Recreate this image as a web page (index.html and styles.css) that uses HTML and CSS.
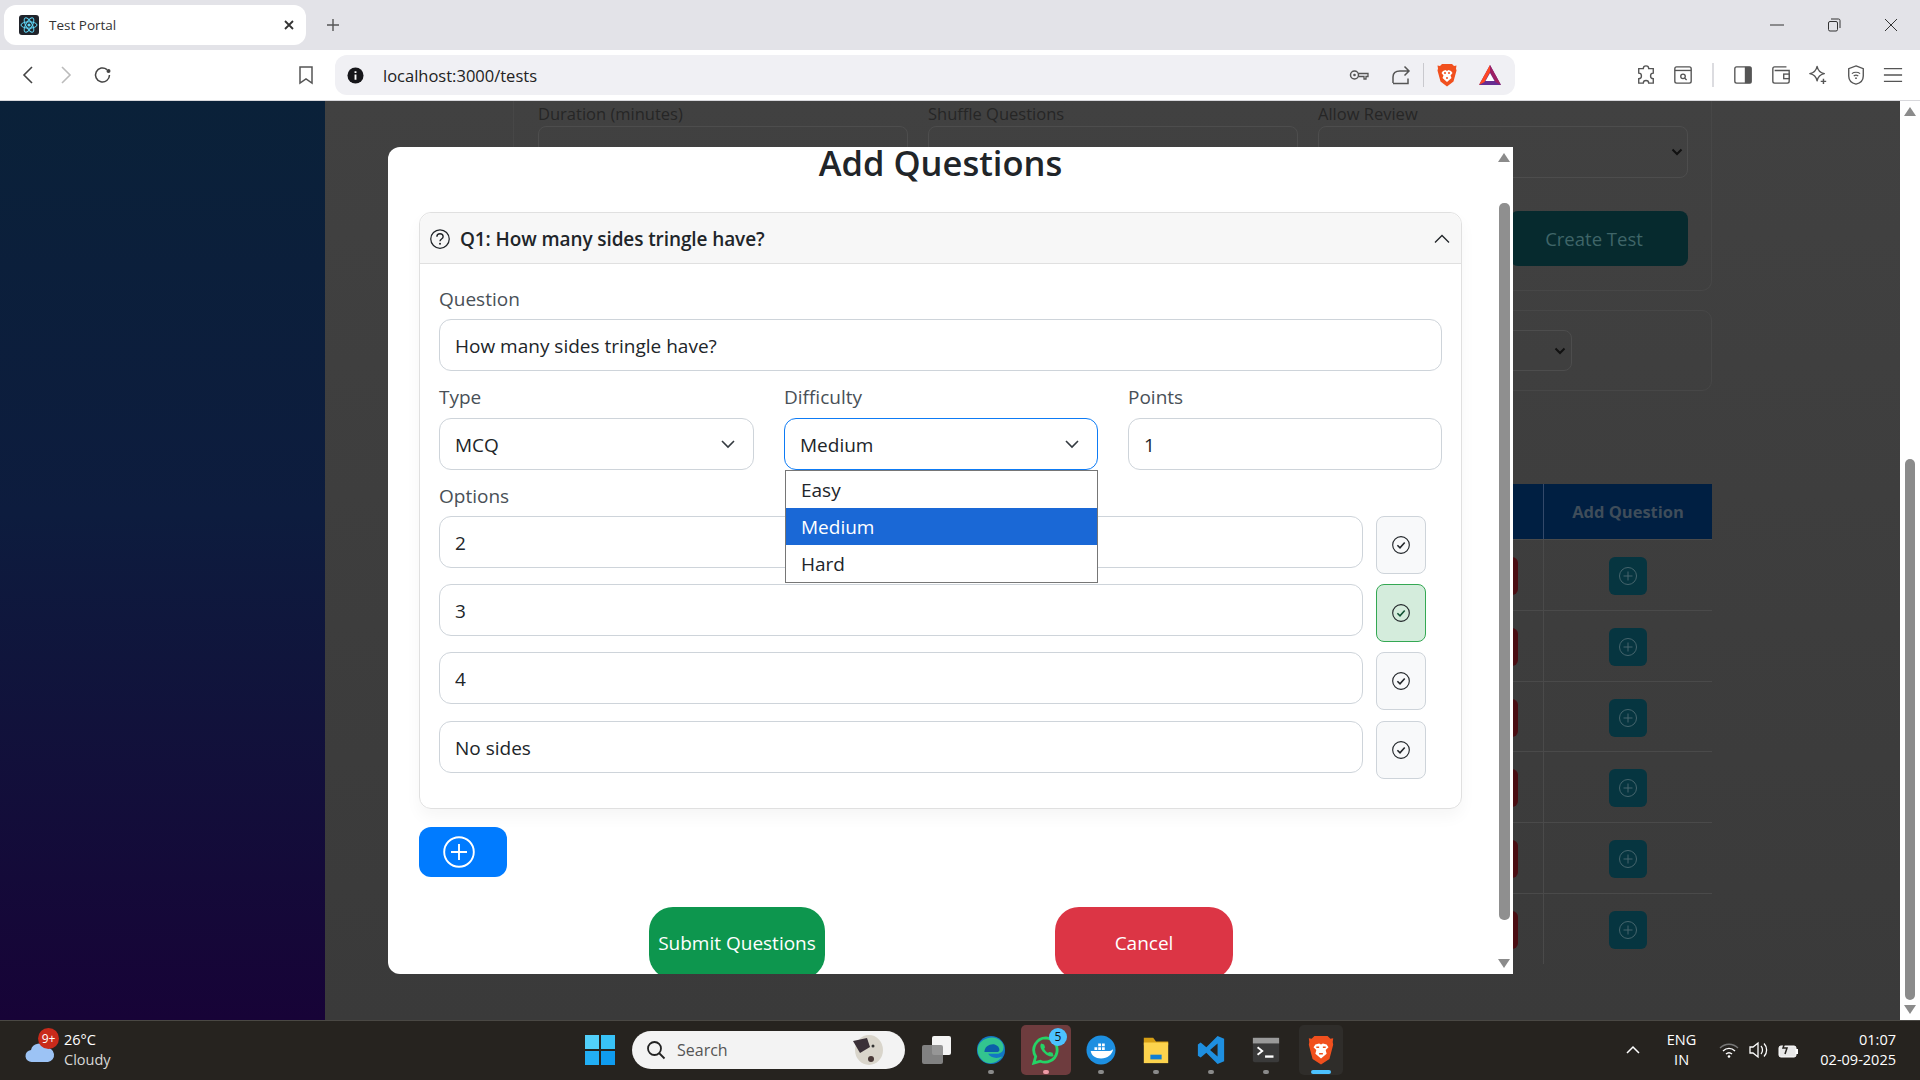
FILE: index.html
```html
<!DOCTYPE html>
<html lang="en">

<head>
    <meta charset="utf-8">
    <title>Test Portal</title>
    <link rel="stylesheet" href="styles.css">
</head>

<body>
    <!-- browser tab strip -->
    <div class="tabstrip">
        <div class="tab">
            <svg class="favicon" viewBox="0 0 20 20"><rect width="20" height="20" rx="3" fill="#20232a"/><g fill="none" stroke="#61dafb" stroke-width="1"><ellipse cx="10" cy="10" rx="8" ry="3.2"/><ellipse cx="10" cy="10" rx="8" ry="3.2" transform="rotate(60 10 10)"/><ellipse cx="10" cy="10" rx="8" ry="3.2" transform="rotate(120 10 10)"/></g><circle cx="10" cy="10" r="1.6" fill="#61dafb"/></svg>
            <span class="tab-title">Test Portal</span>
            <svg class="tab-close" viewBox="0 0 12 12"><path d="M2 2l8 8M10 2l-8 8" stroke="#333" stroke-width="1.8" fill="none"/></svg>
        </div>
        <svg class="new-tab" viewBox="0 0 16 16"><path d="M8 2v12M2 8h12" stroke="#555" stroke-width="1.4"/></svg>
        <div class="win-controls">
            <svg viewBox="0 0 14 14"><path d="M0 7h14" stroke="#333" stroke-width="1"/></svg>
            <svg viewBox="0 0 14 14"><rect x="1.5" y="3.5" width="9" height="9.5" rx="1.5" fill="none" stroke="#333"/><path d="M4 1h7.5a1.5 1.5 0 0 1 1.500 1.500V10" fill="none" stroke="#333"/></svg>
            <svg viewBox="0 0 14 14"><path d="M1 1l12 12M13 1L1 13" stroke="#333" stroke-width="1"/></svg>
        </div>
    </div>

    <!-- browser toolbar -->
    <div class="toolbar">
        <svg class="tool tool-back" viewBox="0 0 20 20"><path d="M13 2L5 10l8 8" fill="none" stroke="#444" stroke-width="1.6"/></svg>
        <svg class="tool tool-fwd" viewBox="0 0 20 20"><path d="M7 2l8 8-8 8" fill="none" stroke="#bbb" stroke-width="1.6"/></svg>
        <svg class="tool tool-reload" viewBox="0 0 20 20"><path d="M16.500 10a7 7 0 1 1-2.500-5.400" fill="none" stroke="#444" stroke-width="1.500"/><circle cx="15.500" cy="6" r="2" fill="#444"/></svg>
        <svg class="tool tool-mark" viewBox="0 0 20 20"><path d="M4 2h12v16l-6-4-6 4z" fill="none" stroke="#555" stroke-width="1.500"/></svg>
        <div class="urlbar">
            <svg class="url-info" viewBox="0 0 18 18"><circle cx="9" cy="9" r="8.500" fill="#16161a"/><path d="M9 4.500v1.800M9 8v5.500" stroke="#fff" stroke-width="2"/></svg>
            <span class="url-text">localhost:3000/tests</span>
            <svg class="url-key" viewBox="0 0 20 14"><circle cx="5.500" cy="7" r="4" fill="none" stroke="#555" stroke-width="1.500"/><circle cx="5.500" cy="7" r="1.300" fill="#555"/><path d="M9.500 5.500H19v3h-2V11h-2V8.500H9.500" fill="none" stroke="#555" stroke-width="1.300"/></svg>
            <svg class="url-share" viewBox="0 0 20 20"><path d="M2 18V12c0-4 3-6 7-6h9M13.500 1.500L18 6l-4.500 4.500M2 18.500h15v-5" fill="none" stroke="#555" stroke-width="1.500"/></svg>
            <span class="url-sep"></span>
            <svg class="url-brave" viewBox="0 0 20 24"><path d="M5 1h10l2 2 2.500-.5-.5 3 .5 2-3 11-6.500 5-6.500-5-3-11 .5-2-.5-3L3 3z" fill="#f1501e"/><path d="M6 8l2.500-1 1.500 1 1.500-1L14 8l1.500 2-2 2.500 1 2.500L10 19l-4.500-4 1-2.500-2-2.500z" fill="#fff"/><path d="M7 10h2M11 10h2M9 15h2" stroke="#f1501e" stroke-width="1.400"/></svg>
            <svg class="url-bat" viewBox="0 0 24 22"><path d="M12 1l11 20H1z" fill="#662d91"/><path d="M12 1l11 20-5.500-3L12 8z" fill="#9e1f63"/><path d="M12 1L1 21l5.500-3L12 8z" fill="#ff4724"/><path d="M12 9l4.500 8h-9z" fill="#fff"/></svg>
        </div>
        <svg class="tool tool-ext" viewBox="0 0 22 22"><path d="M8 4a3 3 0 0 1 6 0h5v5a3 3 0 0 0 0 6v5h-5a3 3 0 0 0-6 0H3v-5a3 3 0 0 0 0-6V4z" fill="none" stroke="#555" stroke-width="1.500"/></svg>
        <svg class="tool tool-find" viewBox="0 0 22 22"><rect x="2" y="2" width="18" height="18" rx="2" fill="none" stroke="#555" stroke-width="1.500"/><path d="M2 6h18" stroke="#555" stroke-width="1.500"/><circle cx="11" cy="12.500" r="2.500" fill="none" stroke="#555" stroke-width="1.500"/><path d="M13 14.500l2 2" stroke="#555" stroke-width="1.500"/></svg>
        <span class="tool-sep"></span>
        <svg class="tool tool-side" viewBox="0 0 22 22"><rect x="2" y="2" width="18" height="18" rx="2" fill="none" stroke="#555" stroke-width="1.500"/><rect x="13" y="2" width="7" height="18" fill="#555"/></svg>
        <svg class="tool tool-wallet" viewBox="0 0 22 22"><path d="M17 2H4a2 2 0 0 0-2 2v14a2 2 0 0 0 2 2h14a2 2 0 0 0 2-2V6H4" fill="none" stroke="#555" stroke-width="1.500"/><rect x="14" y="10" width="6" height="5" fill="#fff" stroke="#555" stroke-width="1.500"/></svg>
        <svg class="tool tool-leo" viewBox="0 0 22 22"><path d="M10 1.500c1 5 3 7 8 8-5 1-7 3-8 8-1-5-3-7-8-8 5-1 7-3 8-8z" fill="none" stroke="#555" stroke-width="1.500" stroke-linejoin="round"/><path d="M17 15v6M14 18h6" stroke="#555" stroke-width="1.600"/></svg>
        <svg class="tool tool-vpn" viewBox="0 0 22 22"><path d="M11 1l8 3v8c0 5-4 8-8 9-4-1-8-4-8-9V4z" fill="none" stroke="#555" stroke-width="1.500"/><path d="M6.500 9.500c2.500-2 6.500-2 9 0M8.500 12c1.500-1 3.500-1 5 0" fill="none" stroke="#555" stroke-width="1.300"/><circle cx="11" cy="14.500" r="1" fill="#555"/></svg>
        <svg class="tool tool-menu" viewBox="0 0 22 22"><path d="M1 4h20M1 11h20M1 18h20" stroke="#555" stroke-width="1.500"/></svg>
    </div>

    <div class="viewport">
        <div class="sidebar"></div>

        <!-- page behind the modal, already dimmed -->
        <main class="main">
            <section class="bg-card bg-card-form">
                <div class="bg-form">
                    <div class="bg-field"><span>Duration (minutes)</span><div class="bg-input"></div></div>
                    <div class="bg-field"><span>Shuffle Questions</span><div class="bg-input"></div></div>
                    <div class="bg-field"><span>Allow Review</span>
                        <div class="bg-input"><svg class="bg-chev" viewBox="0 0 12 8"><path d="M1.500 1.500L6 6l4.500-4.500" fill="none" stroke="#111" stroke-width="2"/></svg></div>
                    </div>
                </div>
                <div class="bg-actions"><div class="bg-create">Create Test</div></div>
            </section>
            <section class="bg-card bg-card-filter">
                <div class="bg-select"><svg class="bg-chev" viewBox="0 0 12 8"><path d="M1.500 1.500L6 6l4.500-4.500" fill="none" stroke="#111" stroke-width="2"/></svg></div>
            </section>
            <section class="bg-table">
                <div class="bg-head"><div class="bg-head-cell">Add Question</div></div>
                <div class="bg-row"><div class="bg-cell-a"><span class="bg-del"></span></div><div class="bg-cell-b"><span class="bg-add"><svg viewBox="0 0 20 20"><circle cx="10" cy="10" r="8.500" fill="none" stroke="#46656d"/><path d="M10 5.500v9M5.500 10h9" stroke="#46656d"/></svg></span></div></div>
                <div class="bg-row"><div class="bg-cell-a"><span class="bg-del"></span></div><div class="bg-cell-b"><span class="bg-add"><svg viewBox="0 0 20 20"><circle cx="10" cy="10" r="8.500" fill="none" stroke="#46656d"/><path d="M10 5.500v9M5.500 10h9" stroke="#46656d"/></svg></span></div></div>
                <div class="bg-row"><div class="bg-cell-a"><span class="bg-del"></span></div><div class="bg-cell-b"><span class="bg-add"><svg viewBox="0 0 20 20"><circle cx="10" cy="10" r="8.500" fill="none" stroke="#46656d"/><path d="M10 5.500v9M5.500 10h9" stroke="#46656d"/></svg></span></div></div>
                <div class="bg-row"><div class="bg-cell-a"><span class="bg-del"></span></div><div class="bg-cell-b"><span class="bg-add"><svg viewBox="0 0 20 20"><circle cx="10" cy="10" r="8.500" fill="none" stroke="#46656d"/><path d="M10 5.500v9M5.500 10h9" stroke="#46656d"/></svg></span></div></div>
                <div class="bg-row"><div class="bg-cell-a"><span class="bg-del"></span></div><div class="bg-cell-b"><span class="bg-add"><svg viewBox="0 0 20 20"><circle cx="10" cy="10" r="8.500" fill="none" stroke="#46656d"/><path d="M10 5.500v9M5.500 10h9" stroke="#46656d"/></svg></span></div></div>
                <div class="bg-row"><div class="bg-cell-a"><span class="bg-del"></span></div><div class="bg-cell-b"><span class="bg-add"><svg viewBox="0 0 20 20"><circle cx="10" cy="10" r="8.500" fill="none" stroke="#46656d"/><path d="M10 5.500v9M5.500 10h9" stroke="#46656d"/></svg></span></div></div>
            </section>
        </main>

        <div class="page-scroll">
            <span class="arrow-up"></span>
            <span class="page-thumb"></span>
            <span class="arrow-down"></span>
        </div>

        <!-- modal -->
        <div class="modal">
            <div class="modal-body">
                <h2 class="modal-title">Add Questions</h2>

                <div class="q-card">
                    <div class="q-header">
                        <svg class="q-icon" viewBox="0 0 16 16"><circle cx="8" cy="8" r="7.400" fill="none" stroke="#212529" stroke-width="1"/><path d="M5.500 6.200c0-3.200 5-3.200 5 0 0 1.800-2.500 1.800-2.500 3.600" fill="none" stroke="#212529" stroke-width="1.100"/><circle cx="8" cy="11.800" r=".8" fill="#212529"/></svg>
                        <span class="q-title">Q1: How many sides tringle have?</span>
                        <svg class="q-chev" viewBox="0 0 16 10"><path d="M1 8.500l7-7 7 7" fill="none" stroke="#212529" stroke-width="1.300"/></svg>
                    </div>
                    <div class="q-body">
                        <label class="f-label">Question</label>
                        <input class="f-input" type="text" value="How many sides tringle have?">

                        <div class="f-row">
                            <div class="f-col">
                                <label class="f-label">Type</label>
                                <div class="f-select"><span>MCQ</span><svg class="sel-chev" viewBox="0 0 16 10"><path d="M2 2l6 6 6-6" fill="none" stroke="#343a40" stroke-width="1.600"/></svg></div>
                            </div>
                            <div class="f-col f-col-dd">
                                <label class="f-label">Difficulty</label>
                                <div class="f-select f-select-open"><span>Medium</span><svg class="sel-chev" viewBox="0 0 16 10"><path d="M2 2l6 6 6-6" fill="none" stroke="#343a40" stroke-width="1.600"/></svg></div>
                                <ul class="dropdown">
                                    <li>Easy</li>
                                    <li class="dd-active">Medium</li>
                                    <li>Hard</li>
                                </ul>
                            </div>
                            <div class="f-col">
                                <label class="f-label">Points</label>
                                <input class="f-input" type="text" value="1">
                            </div>
                        </div>

                        <label class="f-label f-label-options">Options</label>
                        <div class="opt-list">
                            <div class="opt-row">
                                <input class="f-input" type="text" value="2">
                                <button class="opt-btn"><svg viewBox="0 0 16 16"><circle cx="8" cy="8" r="7.400" fill="none" stroke="#212529"/><path d="M4.800 8.200l2.300 2.300 4.200-4.700" fill="none" stroke="#212529" stroke-width="1.400"/></svg></button>
                            </div>
                            <div class="opt-row">
                                <input class="f-input" type="text" value="3">
                                <button class="opt-btn opt-btn-on"><svg viewBox="0 0 16 16"><circle cx="8" cy="8" r="7.400" fill="none" stroke="#212529"/><path d="M4.800 8.200l2.300 2.300 4.200-4.700" fill="none" stroke="#0f5132" stroke-width="1.400"/></svg></button>
                            </div>
                            <div class="opt-row">
                                <input class="f-input" type="text" value="4">
                                <button class="opt-btn"><svg viewBox="0 0 16 16"><circle cx="8" cy="8" r="7.400" fill="none" stroke="#212529"/><path d="M4.800 8.200l2.300 2.300 4.200-4.700" fill="none" stroke="#212529" stroke-width="1.400"/></svg></button>
                            </div>
                            <div class="opt-row">
                                <input class="f-input" type="text" value="No sides">
                                <button class="opt-btn"><svg viewBox="0 0 16 16"><circle cx="8" cy="8" r="7.400" fill="none" stroke="#212529"/><path d="M4.800 8.200l2.300 2.300 4.200-4.700" fill="none" stroke="#212529" stroke-width="1.400"/></svg></button>
                            </div>
                        </div>
                    </div>
                </div>

                <button class="add-btn"><svg viewBox="0 0 32 32"><circle cx="16" cy="16" r="14.800" fill="none" stroke="#fff" stroke-width="1.900"/><path d="M16 8v16M8 16h16" stroke="#fff" stroke-width="1.900"/></svg></button>

                <div class="modal-footer">
                    <button class="foot-btn foot-submit">Submit Questions</button>
                    <button class="foot-btn foot-cancel">Cancel</button>
                </div>
            </div>
            <div class="modal-scroll">
                <span class="arrow-up"></span>
                <span class="modal-thumb"></span>
                <span class="arrow-down"></span>
            </div>
        </div>
    </div>

    <!-- windows taskbar -->
    <footer class="taskbar">
        <div class="weather">
            <svg class="weather-icon" viewBox="0 0 32 32"><path d="M8 26a6 6 0 0 1-1-12 8 8 0 0 1 15-2 7 7 0 0 1 2 14z" fill="#9cc3f5"/></svg>
            <span class="weather-badge">9+</span>
            <div class="weather-text"><span>26°C</span><span class="dim-text">Cloudy</span></div>
        </div>

        <svg class="win-logo" viewBox="0 0 30 30"><rect width="14" height="14" fill="#52d0fa"/><rect x="16" width="14" height="14" fill="#38c2f7"/><rect y="16" width="14" height="14" fill="#22aff5"/><rect x="16" y="16" width="14" height="14" fill="#0f9cf0"/></svg>

        <div class="search-pill">
            <svg class="search-icon" viewBox="0 0 20 20"><circle cx="8.500" cy="8.500" r="6.500" fill="none" stroke="#222" stroke-width="1.800"/><path d="M13 13l5.500 5.500" stroke="#222" stroke-width="1.800"/></svg>
            <span class="search-text">Search</span>
            <svg class="search-art" viewBox="0 0 36 32"><ellipse cx="20" cy="16" rx="14" ry="15" fill="#d9d5cb"/><path d="M4 7l14-3 3 9-10 6z" fill="#3a3038"/><circle cx="24" cy="12" r="1.500" fill="#333"/><circle cx="22" cy="25" r="3" fill="#4a3a38"/></svg>
        </div>

        <svg class="task-view" viewBox="0 0 32 30"><rect x="11" y="1" width="19" height="19" rx="2" fill="#f4f4f4"/><rect x="1" y="10" width="21" height="19" rx="2" fill="#8c8c8c" opacity=".9"/></svg>

        <div class="task-item">
            <svg viewBox="0 0 32 32"><circle cx="16" cy="16" r="15" fill="#1277c4"/><path d="M2 13C5 3 20-1 27 7c4 5 3 12-3 13H13c2 4 9 6 15 3-5 7-14 9-20 5C3 24 1 19 2 13z" fill="#33c48f"/><path d="M9 18c0-6 6-9 11-8 3 1 5 3 5 6 0 1-1 2-2 2z" fill="#0b5fa8"/></svg>
            <i class="task-dot"></i>
        </div>
        <div class="task-item task-item-wa">
            <svg viewBox="0 0 32 32"><path d="M16 3a13 13 0 0 0-11 20l-2 7 7-2A13 13 0 1 0 16 3z" fill="none" stroke="#25d366" stroke-width="3"/><path d="M11 9c-2 2-1 6 3 10s8 5 10 3l-1-3-3-1-2 1c-2-1-3-3-4-4l1-2-1-3z" fill="#25d366"/></svg>
            <span class="wa-badge">5</span>
            <i class="task-dot task-dot-pink"></i>
        </div>
        <div class="task-item">
            <svg viewBox="0 0 32 32"><circle cx="16" cy="16" r="15.500" fill="#1d8fe1"/><path d="M5 17h20c2 0 3-1 4-2-1 6-6 10-13 10-6 0-10-3-11-8z" fill="#fff"/><path d="M9 13h3v3H9zM13 13h3v3h-3zM17 13h3v3h-3zM13 9h3v3h-3zM17 9h3v3h-3z" fill="#fff"/></svg>
            <i class="task-dot"></i>
        </div>
        <div class="task-item">
            <svg viewBox="0 0 32 32"><path d="M3 3h10l3 4h13v4H3z" fill="#d69e14"/><rect x="3" y="8" width="26" height="22" fill="#fcd34d"/><rect x="10" y="21" width="12" height="5" fill="#0f7fd4"/></svg>
            <i class="task-dot"></i>
        </div>
        <div class="task-item">
            <svg viewBox="0 0 32 32"><path d="M23 1l7 3v24l-7 3-12-12-6 5-3-2V10l3-2 6 5z" fill="#1e8fe0"/><path d="M23 9l-8 7 8 7z" fill="#26231f"/></svg>
            <i class="task-dot"></i>
        </div>
        <div class="task-item">
            <svg viewBox="0 0 32 32"><rect x="2" y="3" width="28" height="26" rx="2" fill="#3a3a3a"/><rect x="2" y="3" width="28" height="6" fill="#9a9a9a"/><path d="M7 13l5 4-5 4" fill="none" stroke="#fff" stroke-width="2"/><path d="M15 23h9" stroke="#fff" stroke-width="2.500"/></svg>
            <i class="task-dot"></i>
        </div>
        <div class="task-item task-item-brave">
            <svg viewBox="0 0 28 32"><path d="M7 1h14l3 3 3-.5-.5 4 .5 3-4 15-9 6-9-6-4-15 .5-3-.5-4 3 .5z" fill="#f1501e"/><path d="M8 10l4-1 2 1 2-1 4 1 2 3-3 3 1 4-6 5-6-5 1-4-3-3z" fill="#fff"/><path d="M9 13h3M16 13h3M12 20h4" stroke="#f1501e" stroke-width="1.700"/></svg>
            <i class="task-bar"></i>
        </div>

        <div class="tray">
            <svg class="tray-chev" viewBox="0 0 14 9"><path d="M1 8l6-6 6 6" fill="none" stroke="#fff" stroke-width="1.500"/></svg>
            <div class="tray-lang"><span>ENG</span><span>IN</span></div>
            <svg class="tray-wifi" viewBox="0 0 20 16"><path d="M1 6c5-5 13-5 18 0" fill="none" stroke="#777" stroke-width="1.400"/><path d="M4 9c3.500-3.500 8.500-3.500 12 0M7 12c2-1.800 4-1.800 6 0" fill="none" stroke="#fff" stroke-width="1.400"/><circle cx="10" cy="14.500" r="1.300" fill="#fff"/></svg>
            <svg class="tray-vol" viewBox="0 0 20 18"><path d="M2 6h3l5-4v14l-5-4H2z" fill="none" stroke="#fff" stroke-width="1.300"/><path d="M13 5c2 2 2 6 0 8M16 2.500c3.500 3.500 3.500 9.500 0 13" fill="none" stroke="#fff" stroke-width="1.300"/></svg>
            <svg class="tray-bat" viewBox="0 0 22 18"><rect x="2" y="5" width="17" height="11" rx="2" fill="#e8e8e8" stroke="#fff"/><rect x="19" y="8" width="2" height="5" fill="#fff"/><path d="M8 1l-2 6h4l-2 6" fill="none" stroke="#26231f" stroke-width="1.500"/></svg>
            <div class="tray-clock"><span>01:07</span><span>02-09-2025</span></div>
        </div>
    </footer>
</body>

</html>
```

FILE: styles.css
```css
* {
    box-sizing: border-box;
}

html,
body {
    margin: 0;
    height: 1080px;
    overflow: hidden;
}

body {
    font-family: "Open Sans", "Noto Sans", sans-serif;
    color: #212529;
    background: #3f3f3f;
}

/* tab strip */
.tabstrip {
    height: 50px;
    background: #e3e3e8;
    display: flex;
    align-items: center;
    padding-left: 4px;
}

.tab {
    width: 302px;
    height: 40px;
    margin-top: -1px;
    background: #fff;
    border-radius: 12px;
    display: flex;
    align-items: center;
    padding: 0 11px 0 15px;
}

.favicon {
    width: 20px;
    height: 20px;
}

.tab-title {
    font-size: 13.500px;
    color: #333;
    margin-left: 10px;
    flex: 1;
}

.tab-close {
    width: 12px;
    height: 12px;
}

.new-tab {
    width: 16px;
    height: 16px;
    margin-left: 19px;
}

.win-controls {
    margin-left: auto;
    display: flex;
    align-items: center;
    gap: 43px;
    padding-right: 22px;
}

.win-controls svg {
    width: 14px;
    height: 14px;
}

/* toolbar */
.toolbar {
    height: 51px;
    background: #fff;
    border-bottom: 1px solid #d8d8dc;
    display: flex;
    align-items: center;
    padding-left: 19px;
}

.tool {
    width: 20px;
    height: 20px;
    flex: none;
}

.tool-fwd {
    margin-left: 16px;
}

.tool-reload {
    margin-left: 18px;
}

.tool-mark {
    margin-left: 183px;
}

.urlbar {
    width: 1180px;
    height: 40px;
    margin-left: 19px;
    border-radius: 12px;
    background: #f0f0f4;
    display: flex;
    align-items: center;
    padding-left: 12px;
}

.url-info {
    width: 17px;
    height: 17px;
}

.url-text {
    font-size: 16.500px;
    color: #222;
    margin-left: 19px;
}

.url-key {
    width: 20px;
    height: 14px;
    margin-left: auto;
}

.url-share {
    width: 20px;
    height: 20px;
    margin-left: 22px;
}

.url-sep {
    width: 1px;
    height: 24px;
    background: #c9c9ce;
    margin-left: 12px;
}

.url-brave {
    width: 20px;
    height: 24px;
    margin-left: 13px;
}

.url-bat {
    width: 24px;
    height: 22px;
    margin-left: 21px;
    margin-right: 13px;
}

.tool-ext {
    margin-left: 121px;
}

.tool-find {
    margin-left: 17px;
}

.tool-sep {
    width: 2px;
    height: 24px;
    background: #dcdce0;
    margin-left: 19px;
}

.tool-side {
    margin-left: 19px;
}

.tool-wallet {
    margin-left: 18px;
}

.tool-leo {
    margin-left: 17px;
}

.tool-vpn {
    margin-left: 18px;
}

.tool-menu {
    margin-left: 17px;
}

/* viewport */
.viewport {
    height: 919px;
    display: flex;
    position: relative;
    overflow: hidden;
}

.sidebar {
    width: 325px;
    flex: none;
    background: linear-gradient(180deg, #0a2139 0%, #0d1c3e 45%, #170337 100%);
}

.main {
    flex: 1;
    background: linear-gradient(180deg, #414141, #3a3a3a);
    padding-left: 188px;
    padding-right: 188px;
    overflow: hidden;
}

.page-scroll {
    width: 20px;
    flex: none;
    background: #fff;
    position: relative;
    display: flex;
    flex-direction: column;
    align-items: center;
    justify-content: space-between;
    padding: 6px 0;
}

.page-thumb {
    position: absolute;
    top: 358px;
    left: 5px;
    width: 10px;
    height: 541px;
    border-radius: 5px;
    background: #8b8b8b;
}

.arrow-up,
.arrow-down {
    width: 0;
    height: 0;
    border-left: 6px solid transparent;
    border-right: 6px solid transparent;
}

.arrow-up {
    border-bottom: 9px solid #8b8b8b;
}

.arrow-down {
    border-top: 9px solid #8b8b8b;
}

/* dimmed page */
.bg-card {
    border: 1px solid #474747;
    border-radius: 10px;
}

.bg-card-form {
    height: 190px;
    border-top: none;
    padding: 0 23px 0 24px;
    border-radius: 0 0 10px 10px;
}

.bg-form {
    display: grid;
    grid-template-columns: repeat(3, 370px);
    column-gap: 20px;
    margin-right: -20px;
}

.bg-field span {
    display: block;
    font-size: 16.500px;
    line-height: 24px;
    padding-top: 1px;
    height: 25px;
    color: #262626;
}

.bg-input {
    height: 52px;
    border: 1px solid #4d4d4d;
    border-radius: 8px;
    position: relative;
}

.bg-chev {
    position: absolute;
    right: 4px;
    top: 21px;
    width: 12px;
    height: 8px;
}

.bg-actions {
    display: flex;
    justify-content: flex-end;
    margin-top: 33px;
}

.bg-create {
    width: 178px;
    height: 55px;
    background: #062a2e;
    border-radius: 8px;
    color: #3f6568;
    font-size: 18.500px;
    padding-right: 10px;
    display: flex;
    align-items: center;
    justify-content: center;
}

.bg-card-filter {
    height: 81px;
    margin-top: 19px;
    padding-top: 19px;
    display: flex;
    justify-content: flex-start;
    padding-left: 900px;
}

.bg-select {
    width: 158px;
    height: 41px;
    border: 1px solid #4d4d4d;
    border-radius: 8px;
    position: relative;
}

.bg-select .bg-chev {
    top: 16px;
    right: 5px;
}

.bg-table {
    margin-top: 93px;
}

.bg-head {
    height: 55px;
    background: #001f42;
    display: flex;
    justify-content: flex-end;
}

.bg-head-cell {
    width: 169px;
    border-left: 1px solid #33496a;
    color: #3f4d5a;
    font-size: 16.500px;
    font-weight: 700;
    display: flex;
    align-items: center;
    justify-content: center;
}

.bg-row {
    height: 70.800px;
    border-top: 1px solid #4a4a4a;
    display: flex;
    justify-content: flex-end;
}

.bg-cell-a {
    flex: 1;
    display: flex;
    justify-content: flex-end;
    padding: 17px 25px 0 0;
}

.bg-del {
    width: 38px;
    height: 38px;
    background: #4a0d12;
    border-radius: 6px;
}

.bg-cell-b {
    width: 169px;
    border-left: 1px solid #4a4a4a;
    display: flex;
    justify-content: center;
    padding-top: 17px;
}

.bg-add {
    width: 38px;
    height: 38px;
    background: #063540;
    border-radius: 6px;
    display: flex;
    align-items: center;
    justify-content: center;
}

.bg-add svg {
    width: 20px;
    height: 20px;
}

/* modal sits over the page */
.modal {
    position: absolute;
    left: 388px;
    top: 46px;
    width: 1125px;
    height: 827px;
    background: #fff;
    border-radius: 12px 0 0 12px;
    display: flex;
    overflow: hidden;
}

.modal-body {
    flex: 1;
    padding: 0 35px 0 31px;
    overflow: hidden;
}

.modal-scroll {
    width: 16px;
    flex: none;
    display: flex;
    flex-direction: column;
    align-items: center;
    justify-content: space-between;
    padding: 6px 3px 6px 0;
    position: relative;
}

.modal-thumb {
    position: absolute;
    left: 2px;
    top: 56px;
    width: 11px;
    height: 717px;
    border-radius: 5px;
    background: #8f8f8f;
}

.modal-title {
    margin: 0;
    height: 65px;
    font-size: 34.500px;
    font-weight: 600;
    line-height: 31px;
    text-align: center;
    color: #212529;
}

.q-card {
    border: 1px solid #e0e0e0;
    border-radius: 12px;
    box-shadow: 0 8px 16px rgba(0, 0, 0, 0.04);
    height: 597px;
}

.q-header {
    height: 51px;
    background: #f7f7f7;
    border-bottom: 1px solid #e0e0e0;
    border-radius: 12px 12px 0 0;
    display: flex;
    align-items: center;
    padding: 2px 11px 0 10px;
}

.q-icon {
    width: 20px;
    height: 20px;
}

.q-title {
    margin-left: 10px;
    font-size: 19px;
    font-weight: 600;
    flex: 1;
    letter-spacing: -0.1px;
}

.q-chev {
    width: 16px;
    height: 10px;
}

.q-body {
    padding: 23px 19px 0;
}

.f-label {
    display: block;
    height: 24px;
    line-height: 24px;
    margin-bottom: 8px;
    font-size: 19px;
    font-weight: 500;
    color: #495057;
}

.f-input,
.f-select {
    display: flex;
    align-items: center;
    width: 100%;
    height: 52px;
    border: 1px solid #ced4da;
    border-radius: 12px;
    background: #fff;
    padding: 2px 15px 0;
    font-family: inherit;
    font-size: 19px;
    color: #212529;
    outline: none;
}

.f-select {
    justify-content: space-between;
    padding-right: 17px;
}

.f-select-open {
    border-color: #0d7bf5;
}

.sel-chev {
    width: 16px;
    height: 10px;
    margin-top: -3px;
}

.f-row {
    display: grid;
    grid-template-columns: 315px 314px 1fr;
    column-gap: 30px;
    margin-top: 14px;
}

.f-row .f-label {
    margin-bottom: 9px;
}

.f-col-dd {
    position: relative;
}

.dropdown {
    position: absolute;
    left: 1px;
    right: 0;
    top: 85px;
    margin: 0;
    padding: 0;
    list-style: none;
    background: #fff;
    border: 1px solid #767676;
    font-size: 19px;
    z-index: 5;
}

.dropdown li {
    height: 37px;
    line-height: 39px;
    padding-left: 15px;
}

.dd-active {
    background: #1a68d6;
    color: #fff;
}

.f-label-options {
    margin-top: 14px;
    margin-bottom: 8px;
}

.opt-list {
    display: flex;
    flex-direction: column;
    gap: 10.200px;
}

.opt-row {
    display: flex;
    align-items: flex-start;
    height: 58px;
}

.opt-row .f-input {
    width: 924px;
}

.opt-btn {
    width: 50px;
    height: 58px;
    margin-left: 13px;
    border: 1px solid #ced4da;
    border-radius: 8px;
    background: #f8f9fa;
    display: flex;
    align-items: center;
    justify-content: center;
    padding: 0;
}

.opt-btn svg {
    width: 18px;
    height: 18px;
}

.opt-btn-on {
    background: #d4ecdc;
    border-color: #34a853;
}

.add-btn {
    display: flex;
    align-items: center;
    justify-content: center;
    width: 88px;
    height: 50px;
    margin-top: 18px;
    border: none;
    border-radius: 12px;
    background: #007bff;
    padding: 0 9px 0 0;
}

.add-btn svg {
    width: 32px;
    height: 32px;
}

.modal-footer {
    display: flex;
    margin-top: 30px;
    padding-left: 230px;
}

.foot-btn {
    height: 72px;
    border: none;
    border-radius: 24px;
    color: #fff;
    font-family: inherit;
    font-size: 19px;
    padding: 0;
    flex: none;
}

.foot-submit {
    width: 176px;
    background: #0d964e;
}

.foot-cancel {
    width: 178px;
    margin-left: 230px;
    background: #dc3545;
}

/* taskbar */
.taskbar {
    height: 60px;
    border-top: 1px solid #4a4844;
    background: #26231f;
    display: flex;
    align-items: center;
    color: #fff;
    font-size: 14.500px;
    padding-bottom: 2px;
    position: relative;
}

.weather {
    width: 585px;
    display: flex;
    align-items: center;
    position: relative;
    padding-left: 24px;
    height: 100%;
}

.weather-icon {
    width: 32px;
    height: 32px;
    margin-top: 4px;
}

.weather-badge {
    position: absolute;
    left: 38px;
    top: 7px;
    width: 21px;
    height: 21px;
    border-radius: 50%;
    background: #c92a1b;
    font-size: 12px;
    line-height: 21px;
    text-align: center;
}

.weather-text {
    display: flex;
    flex-direction: column;
    margin-left: 8px;
    line-height: 20px;
}

.dim-text {
    color: #d8d8d8;
}

.win-logo {
    width: 30px;
    height: 30px;
    flex: none;
}

.search-pill {
    width: 273px;
    height: 38px;
    margin-left: 17px;
    background: #f3f3f3;
    border-radius: 19px;
    display: flex;
    align-items: center;
    padding: 0 20px 0 14px;
    flex: none;
}

.search-icon {
    width: 20px;
    height: 20px;
}

.search-text {
    margin-left: 11px;
    color: #555;
    font-size: 16px;
    flex: 1;
}

.search-art {
    width: 36px;
    height: 32px;
}

.task-view {
    width: 32px;
    height: 30px;
    margin-left: 16px;
    flex: none;
}

.task-item {
    width: 50px;
    height: 50px;
    margin-left: 5px;
    flex: none;
    border-radius: 5px;
    display: flex;
    align-items: flex-start;
    justify-content: center;
    padding-top: 10px;
    position: relative;
}

.task-item svg {
    width: 30px;
    height: 30px;
}

.task-view + .task-item {
    margin-left: 13px;
}

.task-item-wa {
    background: #6e3c3e;
}

.task-item-brave {
    background: #2f2d2a;
    width: 44px;
    margin-left: 8px;
}

.task-dot {
    position: absolute;
    left: 22px;
    bottom: 1px;
    width: 6px;
    height: 4px;
    border-radius: 2px;
    background: #8a8a8a;
}

.task-dot-pink {
    background: #ee9aa6;
}

.task-bar {
    position: absolute;
    left: 12px;
    bottom: 1px;
    width: 20px;
    height: 4px;
    border-radius: 2px;
    background: #4cc2ff;
}

.wa-badge {
    position: absolute;
    right: 4px;
    top: 3px;
    width: 18px;
    height: 18px;
    border-radius: 50%;
    background: #4cc2ff;
    color: #111;
    font-size: 12px;
    line-height: 18px;
    text-align: center;
}

.tray {
    margin-left: auto;
    padding-right: 24px;
    display: flex;
    align-items: center;
}

.tray-chev {
    width: 14px;
    height: 9px;
}

.tray-lang {
    display: flex;
    flex-direction: column;
    align-items: center;
    margin-left: 27px;
    line-height: 20px;
}

.tray-wifi {
    width: 20px;
    height: 16px;
    margin-left: 23px;
}

.tray-vol {
    width: 20px;
    height: 18px;
    margin-left: 9px;
}

.tray-bat {
    width: 22px;
    height: 18px;
    margin-left: 9px;
}

.tray-clock {
    display: flex;
    flex-direction: column;
    align-items: flex-end;
    margin-left: 21px;
    line-height: 20px;
}
```
